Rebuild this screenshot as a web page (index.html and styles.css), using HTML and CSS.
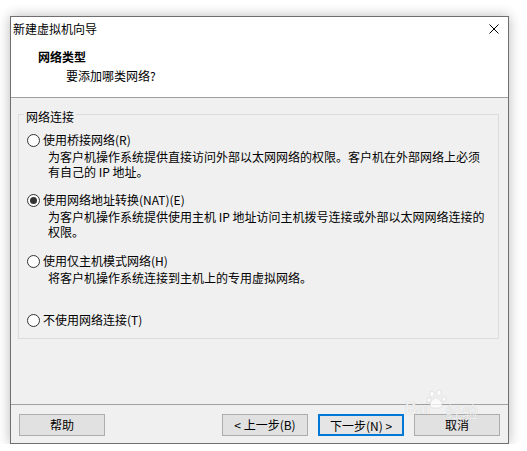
FILE: index.html
```html
<!DOCTYPE html>
<html lang="zh-CN">
<head>
<meta charset="utf-8">
<link rel="stylesheet" href="styles.css">
</head>
<body>
<div class="window">
  <div class="titlebar">
    <span class="title">新建虚拟机向导</span>
    <svg class="close" width="10" height="10" viewBox="0 0 10 10"><path d="M0.5 0.5L9.5 9.5M9.5 0.5L0.5 9.5" stroke="#000" stroke-width="1" fill="none"/></svg>
  </div>
  <div class="header">
    <div class="h-title">网络类型</div>
    <div class="h-sub">要添加哪类网络?</div>
  </div>
  <div class="body">
    <fieldset class="group">
      <legend>网络连接</legend>
      <div class="option o1">
        <div class="radio-row"><span class="radio"></span><span>使用桥接网络(R)</span></div>
        <div class="desc">为客户机操作系统提供直接访问外部以太网网络的权限。客户机在外部网络上必须<br>有自己的 IP 地址。</div>
      </div>
      <div class="option o2">
        <div class="radio-row"><span class="radio checked"></span><span>使用网络地址转换(NAT)(E)</span></div>
        <div class="desc">为客户机操作系统提供使用主机 IP 地址访问主机拨号连接或外部以太网网络连接的<br>权限。</div>
      </div>
      <div class="option o3">
        <div class="radio-row"><span class="radio"></span><span>使用仅主机模式网络(H)</span></div>
        <div class="desc">将客户机操作系统连接到主机上的专用虚拟网络。</div>
      </div>
      <div class="option o4">
        <div class="radio-row"><span class="radio"></span><span>不使用网络连接(T)</span></div>
      </div>
    </fieldset>
    <div class="sep"></div>
    <div class="buttons">
      <button class="btn">帮助</button>
      <div class="right-btns">
        <button class="btn">&lt; 上一步(B)</button>
        <button class="btn default">下一步(N) &gt;</button>
        <button class="btn">取消</button>
      </div>
    </div>
  </div>
  <div class="watermark"><span class="wm-bai">Bai</span><svg class="wm-paw" width="22" height="20" viewBox="0 0 22 20"><g fill="rgba(255,255,255,0.75)" stroke="rgba(200,200,200,0.6)" stroke-width="0.7"><ellipse cx="6" cy="5" rx="2.4" ry="3"/><ellipse cx="13" cy="4" rx="2.4" ry="3"/><ellipse cx="3" cy="11" rx="2" ry="2.6"/><ellipse cx="18" cy="10" rx="2" ry="2.6"/><path d="M10 9c3 0 6 4 6 7s-3 3-6 3-6 0-6-3 3-7 6-7z"/></g></svg><span class="wm-jy">经验</span></div>
</div>
</body>
</html>
```

FILE: styles.css
```css
* { box-sizing: border-box; }

html, body {
  margin: 0;
  padding: 0;
  background: #ffffff;
}

body {
  font-family: "Noto Sans CJK SC", "Noto Sans", sans-serif;
  font-size: 12px;
  color: #000;
  padding: 16px 0 0 10px;
}

.window {
  position: relative;
  width: 499px;
  height: 428px;
  border: 1px solid #6f6f6f;
  background: #f0f0f0;
  box-shadow: 0 0 12px rgba(0, 0, 0, 0.28);
  display: flex;
  flex-direction: column;
}

.titlebar {
  height: 24px;
  background: #fff;
  display: flex;
  align-items: center;
  justify-content: space-between;
  padding: 0 9px 0 2px;
  line-height: 24px;
}

.close { display: block; }

.header {
  height: 57px;
  background: #fff;
  border-bottom: 1px solid #a0a0a0;
  padding-top: 8px;
}

.h-title {
  font-weight: bold;
  line-height: 16px;
  padding-left: 27px;
}

.h-sub {
  line-height: 16px;
  margin-top: 3px;
  padding-left: 55px;
}

.body {
  flex: 1;
  display: flex;
  flex-direction: column;
  padding-bottom: 7px;
}

.group {
  margin: 5px 9px 0 7px;
  padding: 7px 0 10px 0;
  border: 1px solid #dcdcdc;
  min-inline-size: 0;
}

.group legend {
  margin-left: 5px;
  padding: 6px 2px 0 2px;
  line-height: 16px;
}

.option { margin-top: 13px; }
.option.o1 { margin-top: 0; }
.option.o3 { margin-top: 14px; }
.option.o4 { margin-top: 27px; }

.radio-row {
  display: flex;
  align-items: center;
  line-height: 16px;
  padding-left: 8px;
  gap: 3px;
}

.radio {
  width: 13px;
  height: 13px;
  border: 1px solid #333;
  border-radius: 50%;
  background: #fff;
  display: flex;
  align-items: center;
  justify-content: center;
  flex: none;
}

.radio.checked::after {
  content: "";
  width: 7px;
  height: 7px;
  border-radius: 50%;
  background: #333;
}

.desc {
  line-height: 15px;
  padding-left: 29px;
  margin-top: 1px;
  white-space: nowrap;
}

.sep {
  margin-top: auto;
  height: 1px;
  background: #a0a0a0;
}

.buttons {
  display: flex;
  justify-content: space-between;
  padding: 9px 8px 0 8px;
}

.right-btns {
  display: flex;
  gap: 10px;
}

.btn {
  width: 86px;
  height: 22px;
  border: 1px solid #adadad;
  background: #e1e1e1;
  font-family: "Noto Sans CJK SC", "Noto Sans", sans-serif;
  font-size: 12px;
  color: #000;
  padding: 0;
  line-height: 20px;
}

.btn.default {
  border: 2px solid #0078d7;
  background: #e5e5e5;
}

.watermark {
  position: absolute;
  left: 394px;
  top: 372px;
  display: flex;
  align-items: flex-end;
  pointer-events: none;
}

.wm-bai {
  font-family: "Liberation Sans", sans-serif;
  font-weight: bold;
  font-size: 16px;
  line-height: 16px;
  color: rgba(255, 255, 255, 0.75);
  text-shadow: 0 0 1px rgba(160, 160, 160, 0.6);
}

.wm-paw {
  margin: 0 0 8px -4px;
}

.wm-jy {
  font-size: 16px;
  line-height: 16px;
  color: rgba(255, 255, 255, 0.75);
  text-shadow: 0 0 1px rgba(160, 160, 160, 0.6);
  margin-left: -2px;
  margin-bottom: -2px;
}
```
